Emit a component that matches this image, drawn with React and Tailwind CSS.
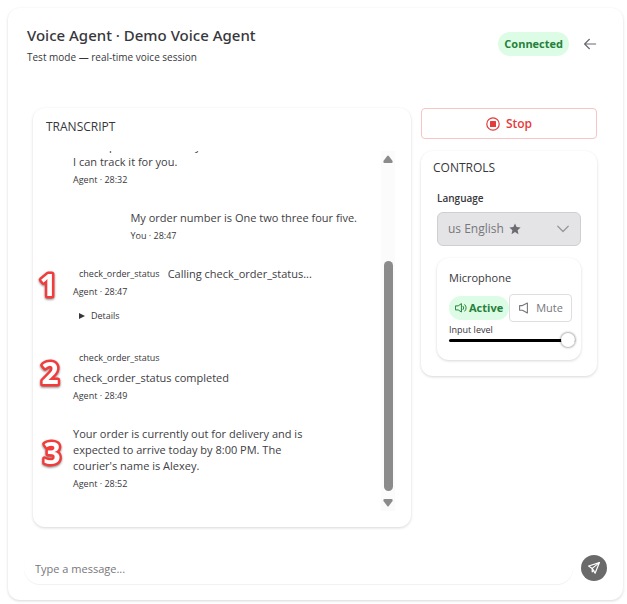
import React from "react";

const messages = [
  {
    id: 1,
    author: "Agent",
    time: "28:32",
    text: "Please provide me with your order number so I can track it for you.",
  },
  {
    id: 2,
    author: "You",
    time: "28:47",
    text: "My order number is One two three four five.",
  },
  {
    id: 3,
    author: "Agent",
    time: "28:47",
    tool: "check_order_status",
    text: "Calling check_order_status...",
    inline: true,
    details: true,
    marker: "1",
    markerClass: "-left-10 top-1",
  },
  {
    id: 4,
    author: "Agent",
    time: "28:49",
    tool: "check_order_status",
    text: "check_order_status completed",
    marker: "2",
    markerClass: "-left-9.5 top-2",
  },
  {
    id: 5,
    author: "Agent",
    time: "28:52",
    text: "Your order is currently out for delivery and is expected to arrive today by 8:00 PM. The courier's name is Alexey.",
    marker: "3",
    markerClass: "-left-9 top-3",
  },
];

const ArrowLeftIcon = () => (
  <svg viewBox="0 0 14 14" className="size-3.5" fill="none" stroke="currentColor" strokeWidth="1.2" strokeLinecap="round" strokeLinejoin="round">
    <path d="M12.6 7H1.8M6.4 2.3 1.6 7l4.8 4.7" />
  </svg>
);

const StopIcon = () => (
  <svg viewBox="0 0 14 14" className="size-3.5" fill="none">
    <circle cx="7" cy="7" r="6.2" stroke="currentColor" strokeWidth="1.2" />
    <rect x="4" y="4" width="6" height="6" rx="0.6" fill="currentColor" />
  </svg>
);

const SpeakerIcon = () => (
  <svg viewBox="0 0 12 12" className="size-3" fill="none" stroke="currentColor" strokeWidth="1" strokeLinejoin="round" strokeLinecap="round">
    <path d="M0.8 3.9h2.4L6.4 1.6v8.4L3.2 7.9H0.8z" />
    <path d="M8.1 4.2a2.6 2.6 0 0 1 0 3.4M9.8 2.7a4.8 4.8 0 0 1 0 6.4" />
  </svg>
);

const MuteIcon = () => (
  <svg viewBox="0 0 12 12" className="size-3" fill="none" stroke="currentColor" strokeWidth="1.1" strokeLinejoin="round">
    <path d="M1.6 3.6h2.8L9.4 1v10L4.4 8.2H1.6z" />
  </svg>
);

const StarIcon = () => (
  <svg viewBox="0 0 12 12" className="size-3" fill="currentColor">
    <path d="M6 .4l1.6 3.7 4 .4-3 2.7.9 4L6 9.1l-3.5 2.1.9-4-3-2.7 4-.4z" />
  </svg>
);

const ChevronIcon = () => (
  <svg viewBox="0 0 12 12" className="size-3" fill="none" stroke="currentColor" strokeWidth="1.3" strokeLinecap="round" strokeLinejoin="round">
    <path d="M.8 3.3 6 8.5l5.2-5.2" />
  </svg>
);

const SendIcon = () => (
  <svg viewBox="0 0 14 14" className="size-3.5" fill="none" stroke="currentColor" strokeWidth="1.2" strokeLinejoin="round" strokeLinecap="round">
    <path d="M12.4 1.6 1.6 5l3.6 2.4 2.9 4.8z" />
    <path d="M12.4 1.6 5.2 7.4v3.4l1.6-1.4" />
  </svg>
);

const Marker = ({ label }) => (
  <svg viewBox="0 0 32 32" className="size-8 overflow-visible drop-shadow-[0_1px_1px_rgba(0,0,0,0.5)]">
    <text
      x="15"
      y="26"
      textAnchor="middle"
      fontSize="30"
      fontWeight="700"
      fill="#fff"
      stroke="#f23c3c"
      strokeWidth="5"
      strokeLinejoin="round"
      paintOrder="stroke"
    >
      {label}
    </text>
  </svg>
);

const Message = ({ message }) => {
  const { author, time, text, tool, inline, details, marker, markerClass } = message;
  const mine = author === "You";

  return (
    <div className={mine ? "relative mr-6 ml-auto" : "relative ml-7 max-w-60"}>
      {marker && (
        <div className={`absolute ${markerClass}`}>
          <Marker label={marker} />
        </div>
      )}
      <div className={inline ? "flex items-center gap-2 whitespace-nowrap" : ""}>
        {tool && (
          <div className={inline ? "pl-1.5 text-[9px] leading-4" : "mb-1 pl-1.5 text-[9px] leading-4"}>
            {tool}
          </div>
        )}
        <p className="text-[11px] leading-4 text-[#404044]">{text}</p>
      </div>
      <div className="mt-1 text-[9px] leading-3">
        {author} · {time}
      </div>
      {details && (
        <details className="mt-3 pb-1 pl-1.5 text-[9px] leading-3">
          <summary className="flex list-none items-center gap-1.5">
            <svg viewBox="0 0 6 6" className="size-1.5" fill="currentColor">
              <path d="M0 0l6 3-6 3z" />
            </svg>
            Details
          </summary>
        </details>
      )}
    </div>
  );
};

const Scrollbar = () => (
  <div className="flex w-3.5 flex-col items-center bg-[#fbfbfb] py-1 text-[#8b8b8b]" aria-hidden="true">
    <svg viewBox="0 0 10 8" className="h-2 w-2.5" fill="currentColor">
      <path d="M4.2 1Q5 0 5.8 1L9.6 6Q10 8 8.6 8H1.4Q0 8 .4 6z" />
    </svg>
    <div className="grow-[98]" />
    <div className="w-[9px] grow-[230] rounded-full bg-[#8b8b8b]" />
    <svg viewBox="0 0 10 8" className="mt-2 h-2 w-2.5" fill="currentColor">
      <path d="M4.2 7Q5 8 5.8 7L9.6 2Q10 0 8.6 0H1.4Q0 0 .4 2z" />
    </svg>
  </div>
);

const Transcript = () => (
  <section className="rounded-xl p-4 pt-[11px] pl-3 shadow-[0_1px_3px_rgba(0,0,0,0.16)]">
    <h2 className="pl-px text-[12px] leading-4 font-medium">TRANSCRIPT</h2>
    <div className="mt-4 -ml-3 flex h-[360px]">
      <div className="flex min-w-0 flex-1 flex-col justify-end gap-6 overflow-hidden pb-[21px] pl-3">
        {messages.map((message) => (
          <Message key={message.id} message={message} />
        ))}
      </div>
      <Scrollbar />
    </div>
  </section>
);

const Controls = () => (
  <section className="rounded-xl px-4 pt-[7px] pb-4 shadow-[0_1px_3px_rgba(0,0,0,0.16)]">
    <h2 className="-ml-1 text-[12px] leading-5 font-medium">CONTROLS</h2>
    <label htmlFor="language" className="mt-3 block text-[10px] leading-4 font-semibold">
      Language
    </label>
    <div className="relative mt-1.5">
      <select
        id="language"
        disabled
        className="h-[34px] w-full appearance-none rounded-md border border-[#cfcfd2] bg-[#e4e4e6] pl-2.5 text-[12px] text-[#77777c]"
      >
        <option>us English</option>
      </select>
      <span className="pointer-events-none absolute inset-y-0 left-[72px] flex items-center text-[#6b6b70]">
        <StarIcon />
      </span>
      <span className="pointer-events-none absolute inset-y-0 right-3 flex items-center text-[#98989d]">
        <ChevronIcon />
      </span>
    </div>
    <div className="mt-3 rounded-xl px-3 pt-3 pb-4 shadow-[0_1px_3px_rgba(0,0,0,0.16)]">
      <h3 className="text-[11px] leading-4 font-medium">Microphone</h3>
      <div className="mt-2 flex items-center">
        <span className="flex h-6 items-center gap-0.5 rounded-full bg-[#dcfce5] px-1.5 text-[11px] font-bold text-[#26803a]">
          <SpeakerIcon />
          Active
        </span>
        <button type="button" className="flex h-7 items-center gap-1.5 rounded border border-[#dedee1] px-2 text-[11px] font-medium text-[#77777c]">
          <MuteIcon />
          Mute
        </button>
      </div>
      <label htmlFor="level" className="mt-0.5 block text-[9px] leading-3">
        Input level
      </label>
      <input
        id="level"
        type="range"
        defaultValue="100"
        className="block h-2 w-[126px] appearance-none bg-transparent [&::-webkit-slider-runnable-track]:h-[3px] [&::-webkit-slider-runnable-track]:rounded-full [&::-webkit-slider-runnable-track]:bg-black [&::-webkit-slider-thumb]:-mt-1.5 [&::-webkit-slider-thumb]:size-3.5 [&::-webkit-slider-thumb]:appearance-none [&::-webkit-slider-thumb]:rounded-full [&::-webkit-slider-thumb]:bg-white [&::-webkit-slider-thumb]:shadow-[0_0_2px_1px_rgba(0,0,0,0.3)]"
      />
    </div>
  </section>
);

export default function App() {
  return (
    <div className="bg-white pt-2 pr-1 pb-1 pl-2 font-['Open_Sans','Noto_Sans',sans-serif] text-[#37373b]">
      <main className="rounded-xl px-4 pt-[15px] pb-4 shadow-[0_1px_3px_rgba(0,0,0,0.16)]">
        <header className="flex items-start justify-between pr-2.5 pl-[3px]">
          <div>
            <h1 className="font-['Noto_Sans','Open_Sans',sans-serif] text-[15px] leading-6 font-medium">
              Voice Agent · Demo Voice Agent
            </h1>
            <p className="text-[10px] leading-5">Test mode — real-time voice session</p>
          </div>
          <div className="mt-[9px] flex items-center gap-3.5">
            <span className="rounded-full bg-[#dcfce5] px-1.5 py-1 text-[11px] leading-4 font-bold text-[#26803a]">
              Connected
            </span>
            <button type="button" aria-label="Back" className="text-[#6b6b72]">
              <ArrowLeftIcon />
            </button>
          </div>
        </header>

        <div className="mt-[41px] grid grid-cols-[minmax(0,1fr)_176px] items-start gap-2.5 pr-2.5 pl-[9px]">
          <Transcript />
          <div className="flex flex-col gap-3">
            <button
              type="button"
              className="flex h-[31px] items-center justify-center gap-1.5 rounded border border-[#f8c4c4] text-[12px] font-semibold text-[#e5393b]"
            >
              <StopIcon />
              Stop
            </button>
            <Controls />
          </div>
        </div>

        <form className="mt-[25px] flex items-center gap-2">
          <input
            type="text"
            aria-label="Message"
            placeholder="Type a message..."
            className="h-8 min-w-0 flex-1 rounded-full px-[11px] text-[11px] shadow-[0_1px_1px_rgba(0,0,0,0.06)] placeholder:text-[#77777b]"
          />
          <button type="button" aria-label="Send" className="flex size-[26px] items-center justify-center rounded-full bg-[#6a6a6b] text-white">
            <SendIcon />
          </button>
        </form>
      </main>
    </div>
  );
}
